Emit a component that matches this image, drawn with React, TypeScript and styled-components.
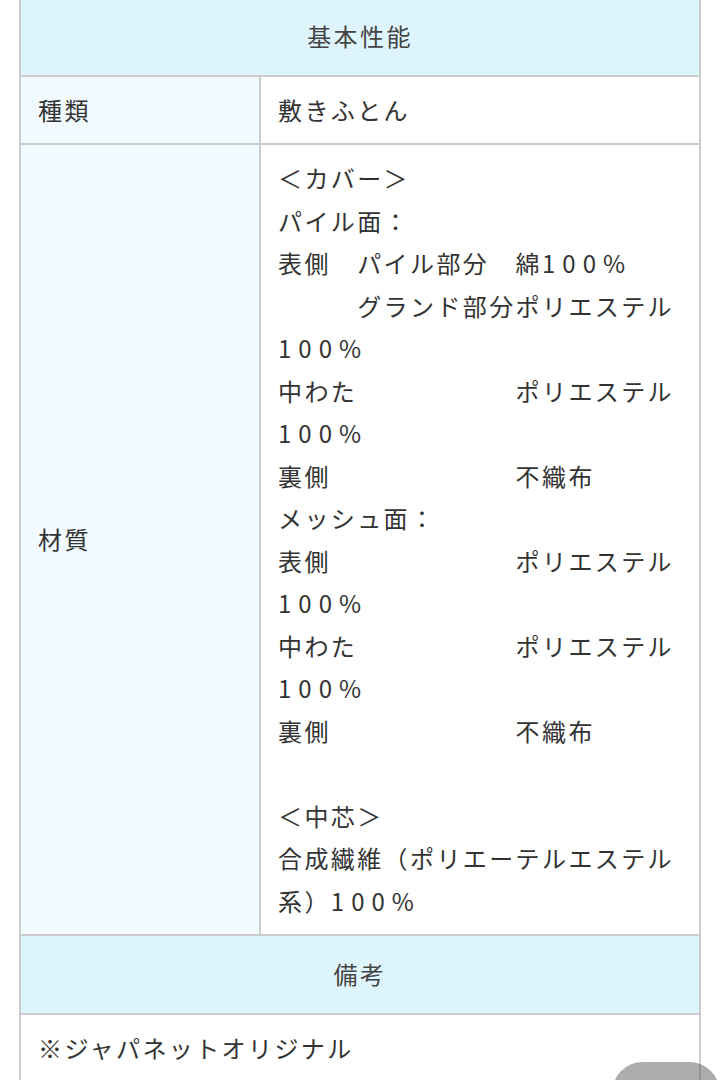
import styled, { createGlobalStyle } from 'styled-components';

const GlobalStyle = createGlobalStyle`
	html,
	body {
		margin: 0;
		padding: 0;
		background: #ffffff;
	}

	body {
		font-family: 'Noto Sans CJK JP', 'Noto Sans', sans-serif;
		color: #333333;
		overflow: hidden;
	}
`;

const Page = styled.div`
	padding-left: 19px;
	width: 682px;
`;

const SpecTable = styled.table`
	width: 100%;
	margin-top: -4px;
	border-collapse: collapse;
	table-layout: fixed;

	font-size: 24px;
	line-height: 42.5px;
	letter-spacing: 0.1em;
`;

const LabelCol = styled.col`
	width: 240px;
`;

const SectionHead = styled.th`
	padding: 17px 17px;
	border: solid 2px #cccccc;
	background: #dff5fd;

	font-weight: 400;
	color: #444444;
	text-align: center;
`;

const Label = styled.th`
	padding: 12px 17px;
	border: solid 2px #cccccc;
	background: #f1fbff;

	font-weight: 400;
	text-align: left;
	vertical-align: middle;
`;

const Value = styled.td`
	padding: 12px 17px;
	border: solid 2px #cccccc;
	background: #ffffff;

	text-align: left;
	vertical-align: top;
`;

const Line = styled.div<{ $blank?: boolean }>`
	min-height: ${({ $blank }) => ($blank ? '42.5px' : '0')};
	white-space: pre-wrap;
	word-break: normal;
`;

const Num = styled.span`
	letter-spacing: 7px;
`;

const ScrollTop = styled.button`
	position: fixed;
	right: 2px;
	bottom: -44px;
	width: 108px;
	height: 62px;
	border: none;
	border-radius: 31px;
	background: rgba(90, 90, 90, 0.5);
`;

type Material = {
	text: string;
	num?: string;
};

const materials: Material[] = [
	{ text: '＜カバー＞' },
	{ text: 'パイル面：' },
	{ text: '表側　パイル部分　綿', num: '100%' },
	{ text: '　　　グランド部分ポリエステル', num: '100%' },
	{ text: '中わた　　　　　　ポリエステル', num: '100%' },
	{ text: '裏側　　　　　　　不織布' },
	{ text: 'メッシュ面：' },
	{ text: '表側　　　　　　　ポリエステル', num: '100%' },
	{ text: '中わた　　　　　　ポリエステル', num: '100%' },
	{ text: '裏側　　　　　　　不織布' },
	{ text: '' },
	{ text: '＜中芯＞' },
	{ text: '合成繊維（ポリエーテルエステル系）', num: '100%' }
];

export default function App() {
	return (
		<>
			<GlobalStyle />
			<Page>
				<SpecTable>
					<colgroup>
						<LabelCol />
						<col />
					</colgroup>
					<tbody>
						<tr>
							<SectionHead colSpan={2}>基本性能</SectionHead>
						</tr>
						<tr>
							<Label>種類</Label>
							<Value>敷きふとん</Value>
						</tr>
						<tr>
							<Label>材質</Label>
							<Value>
								{materials.map((item, i) => (
									<Line key={i} $blank={!item.text}>
										{item.text}
										{item.num && <Num>{item.num}</Num>}
									</Line>
								))}
							</Value>
						</tr>
						<tr>
							<SectionHead colSpan={2}>備考</SectionHead>
						</tr>
						<tr>
							<Value colSpan={2}>※ジャパネットオリジナル</Value>
						</tr>
					</tbody>
				</SpecTable>
			</Page>
			<ScrollTop aria-label="ページの先頭へ" />
		</>
	);
}
